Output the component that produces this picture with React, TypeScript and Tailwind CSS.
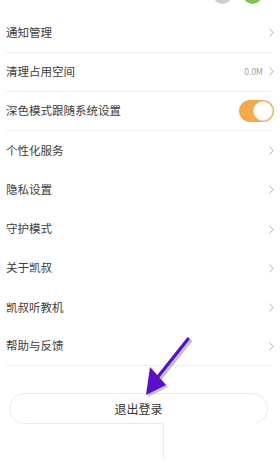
import React from 'react'

// settings list, mobile "我的 > 设置" page (bottom part)

type Row = { label: string; extra?: string; toggle?: boolean; line?: boolean }

const rows: Row[] = [
  { label: '通知管理', line: true },
  { label: '清理占用空间', extra: '0.0M', line: true },
  { label: '深色模式跟随系统设置', toggle: true, line: true },
  { label: '个性化服务' },
  { label: '隐私设置' },
  { label: '守护模式' },
  { label: '关于凯叔' },
  { label: '凯叔听教机' },
  { label: '帮助与反馈', line: true },
]

const font = { fontFamily: '"Noto Sans CJK SC", "Noto Sans", sans-serif' }

function Chevron() {
  return (
    <svg width="5" height="9" viewBox="0 0 5 9" className="shrink-0">
      <path d="M0.6 0.6 L4.2 4.5 L0.6 8.4" fill="none" stroke="#a8a8a8" strokeWidth="0.9" />
    </svg>
  )
}

function Toggle() {
  return (
    <div className="relative h-[22px] w-[35px] rounded-full bg-[#f2aa4c]">
      <div className="absolute right-[1px] top-[1px] h-[20px] w-[20px] rounded-full border border-[#e2e2e2] bg-white" />
    </div>
  )
}

export default function App() {
  return (
    <div className="relative h-[470px] w-[280px] overflow-hidden bg-white text-[#3c3c3c]" style={font}>
      <div className="flex h-[13.5px] justify-end gap-[11px] pr-[18px]">
        <div className="-mt-[15px] h-[19px] w-[19px] rounded-full bg-[#cfcfcf]" />
        <div className="-mt-[15px] h-[19px] w-[19px] rounded-full bg-[#7cc35a]" />
      </div>

      <div className="pl-[6px] pr-[7px]">
        {rows.map(r => (
          <div key={r.label}
            className={`flex h-[39.2px] items-center justify-between ${r.line ? 'border-b border-[#efefef]' : ''}`}>
            <span className="text-[11.5px] leading-none">{r.label}</span>
            {r.toggle ? (
              <div className="-mr-[1px]"><Toggle /></div>
            ) : (
              <div className="flex items-center gap-[6px] -mr-[1px]">
                {r.extra && <span className="text-[8.5px] text-[#a0a0a0]">{r.extra}</span>}
                <Chevron />
              </div>
            )}
          </div>
        ))}
      </div>

      <div className="mt-[27px] px-[9px] pr-[12px]">
        <button className="flex h-[31px] w-full items-center justify-center rounded-full border border-[#ebebeb] text-[12px] text-[#333]">
          退出登录
        </button>
      </div>

      {/* screenshot seam under the button */}
      <div className="absolute left-[163px] top-[423px] h-[3px] w-[110px] bg-white" />
      <div className="absolute left-[163px] top-[424px] h-[35px] w-px bg-[#ececec]" />

      {/* purple pointer arrow */}
      <svg className="pointer-events-none absolute left-0 top-0" width="280" height="470" viewBox="0 0 280 470">
        <g transform="translate(2,2)" opacity="0.35">
          <path d="M188 339 L157 378" stroke="#555" strokeWidth="4" strokeLinecap="round" />
          <path d="M150 367 L166 385 L146 395 Z" fill="#555" />
        </g>
        <path d="M188 339 L157 378" stroke="#5a10c6" strokeWidth="3.2" strokeLinecap="round" />
        <path d="M150 367 L166 385 L146 395 Z" fill="#5a10c6" />
      </svg>
    </div>
  )
}
